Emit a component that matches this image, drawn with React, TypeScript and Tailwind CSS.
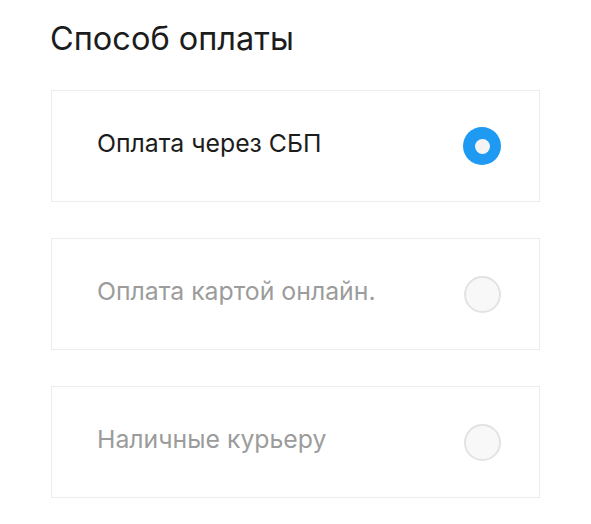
const methods = [
  { id: 'sbp', label: 'Оплата через СБП', active: true },
  { id: 'card', label: 'Оплата картой онлайн.', active: false },
  { id: 'cash', label: 'Наличные курьеру', active: false },
];

function Radio({ checked }: { checked: boolean }) {
  if (checked) {
    return (
      <span className="flex h-[38px] w-[38px] items-center justify-center rounded-full bg-[#1f9af2]">
        <span className="h-[15px] w-[15px] rounded-full bg-[#f4f4f4]" />
      </span>
    );
  }
  return <span className="h-[37px] w-[37px] rounded-full border-2 border-[#e3e3e3] bg-[#f8f8f8]" />;
}

export default function App() {
  return (
    <div className="min-h-[524px] w-[591px] bg-white pl-[51px] pr-[51px] pt-[18px] font-['Inter',sans-serif]">
      <h2 className="-ml-px text-[32.5px] leading-[42px] text-[#1c1c1c]">Способ оплаты</h2>
      <div className="mt-[30px] flex flex-col gap-[36px]">
        {methods.map((m) => (
          <div
            key={m.id}
            className="flex h-[112px] items-center justify-between border border-[#ececec] pl-[45px] pr-[38px]"
          >
            <span className={`mb-[5px] text-[24.8px] leading-none ${m.active ? 'text-[#1c1c1c]' : 'text-[#9c9c9c]'}`}>{m.label}</span>
            <Radio checked={m.active} />
          </div>
        ))}
      </div>
    </div>
  );
}
